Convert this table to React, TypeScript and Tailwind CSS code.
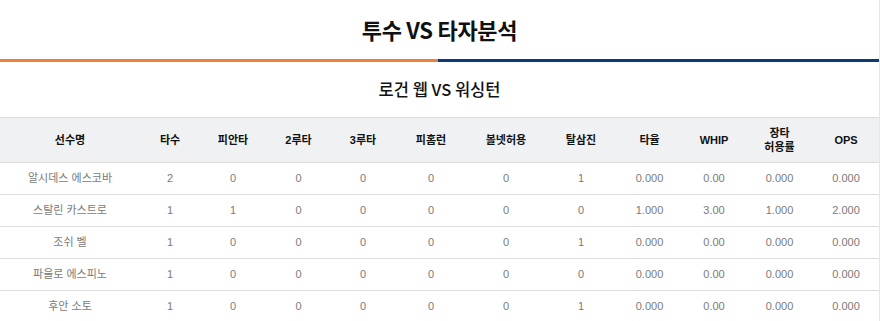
const cols = "grid grid-cols-[140px_60px_66px_65px_64px_72px_78px_72px_65px_64px_67px_66px]";

const headers = ["선수명", "타수", "피안타", "2루타", "3루타", "피홈런", "볼넷허용", "탈삼진", "타율", "WHIP", "장타\n허용률", "OPS"];

const rows = [
  ["알시데스 에스코바", "2", "0", "0", "0", "0", "0", "1", "0.000", "0.00", "0.000", "0.000"],
  ["스탈린 카스트로", "1", "1", "0", "0", "0", "0", "0", "1.000", "3.00", "1.000", "2.000"],
  ["조쉬 벨", "1", "0", "0", "0", "0", "0", "1", "0.000", "0.00", "0.000", "0.000"],
  ["파울로 에스피노", "1", "0", "0", "0", "0", "0", "0", "0.000", "0.00", "0.000", "0.000"],
  ["후안 소토", "1", "0", "0", "0", "0", "0", "1", "0.000", "0.00", "0.000", "0.000"],
];

export default function App() {
  return (
    <div className="w-[880px] h-[321px] overflow-hidden bg-white border-r border-[#e6e6e6] font-['Liberation_Sans','Noto_Sans_CJK_KR',sans-serif]">
      <div className="h-[59px] flex items-center justify-center">
        <h1 className="text-[22px] font-bold text-[#111] font-['Noto_Sans_CJK_KR',sans-serif] tracking-[-0.3px]">투수 VS 타자분석</h1>
      </div>
      <div className="flex h-[3px]">
        <div className="w-[438px] bg-[#f0803c]" />
        <div className="flex-1 bg-[#0b3a7a]" />
      </div>
      <div className="h-[55px] flex items-center justify-center">
        <h2 className="text-[16.5px] font-medium text-[#111] font-['Noto_Sans_CJK_KR',sans-serif]">로건 웹 VS 워싱턴</h2>
      </div>
      <div className="border-t border-[#dddddd]">
        <div className={`${cols} h-[45px] bg-[#f0f1f3] border-b border-[#dddddd] items-center`}>
          {headers.map((h) => (
            <div key={h} className="text-center text-[11px] font-bold text-[#111] leading-[14px] whitespace-pre-line">
              {h}
            </div>
          ))}
        </div>
        {rows.map((r) => (
          <div key={r[0]} className={`${cols} h-[32px] border-b border-[#dddddd] items-center`}>
            {r.map((c, i) => (
              <div key={i} className="text-center text-[11px] text-[#7a7a7a]">
                {c}
              </div>
            ))}
          </div>
        ))}
      </div>
    </div>
  );
}
